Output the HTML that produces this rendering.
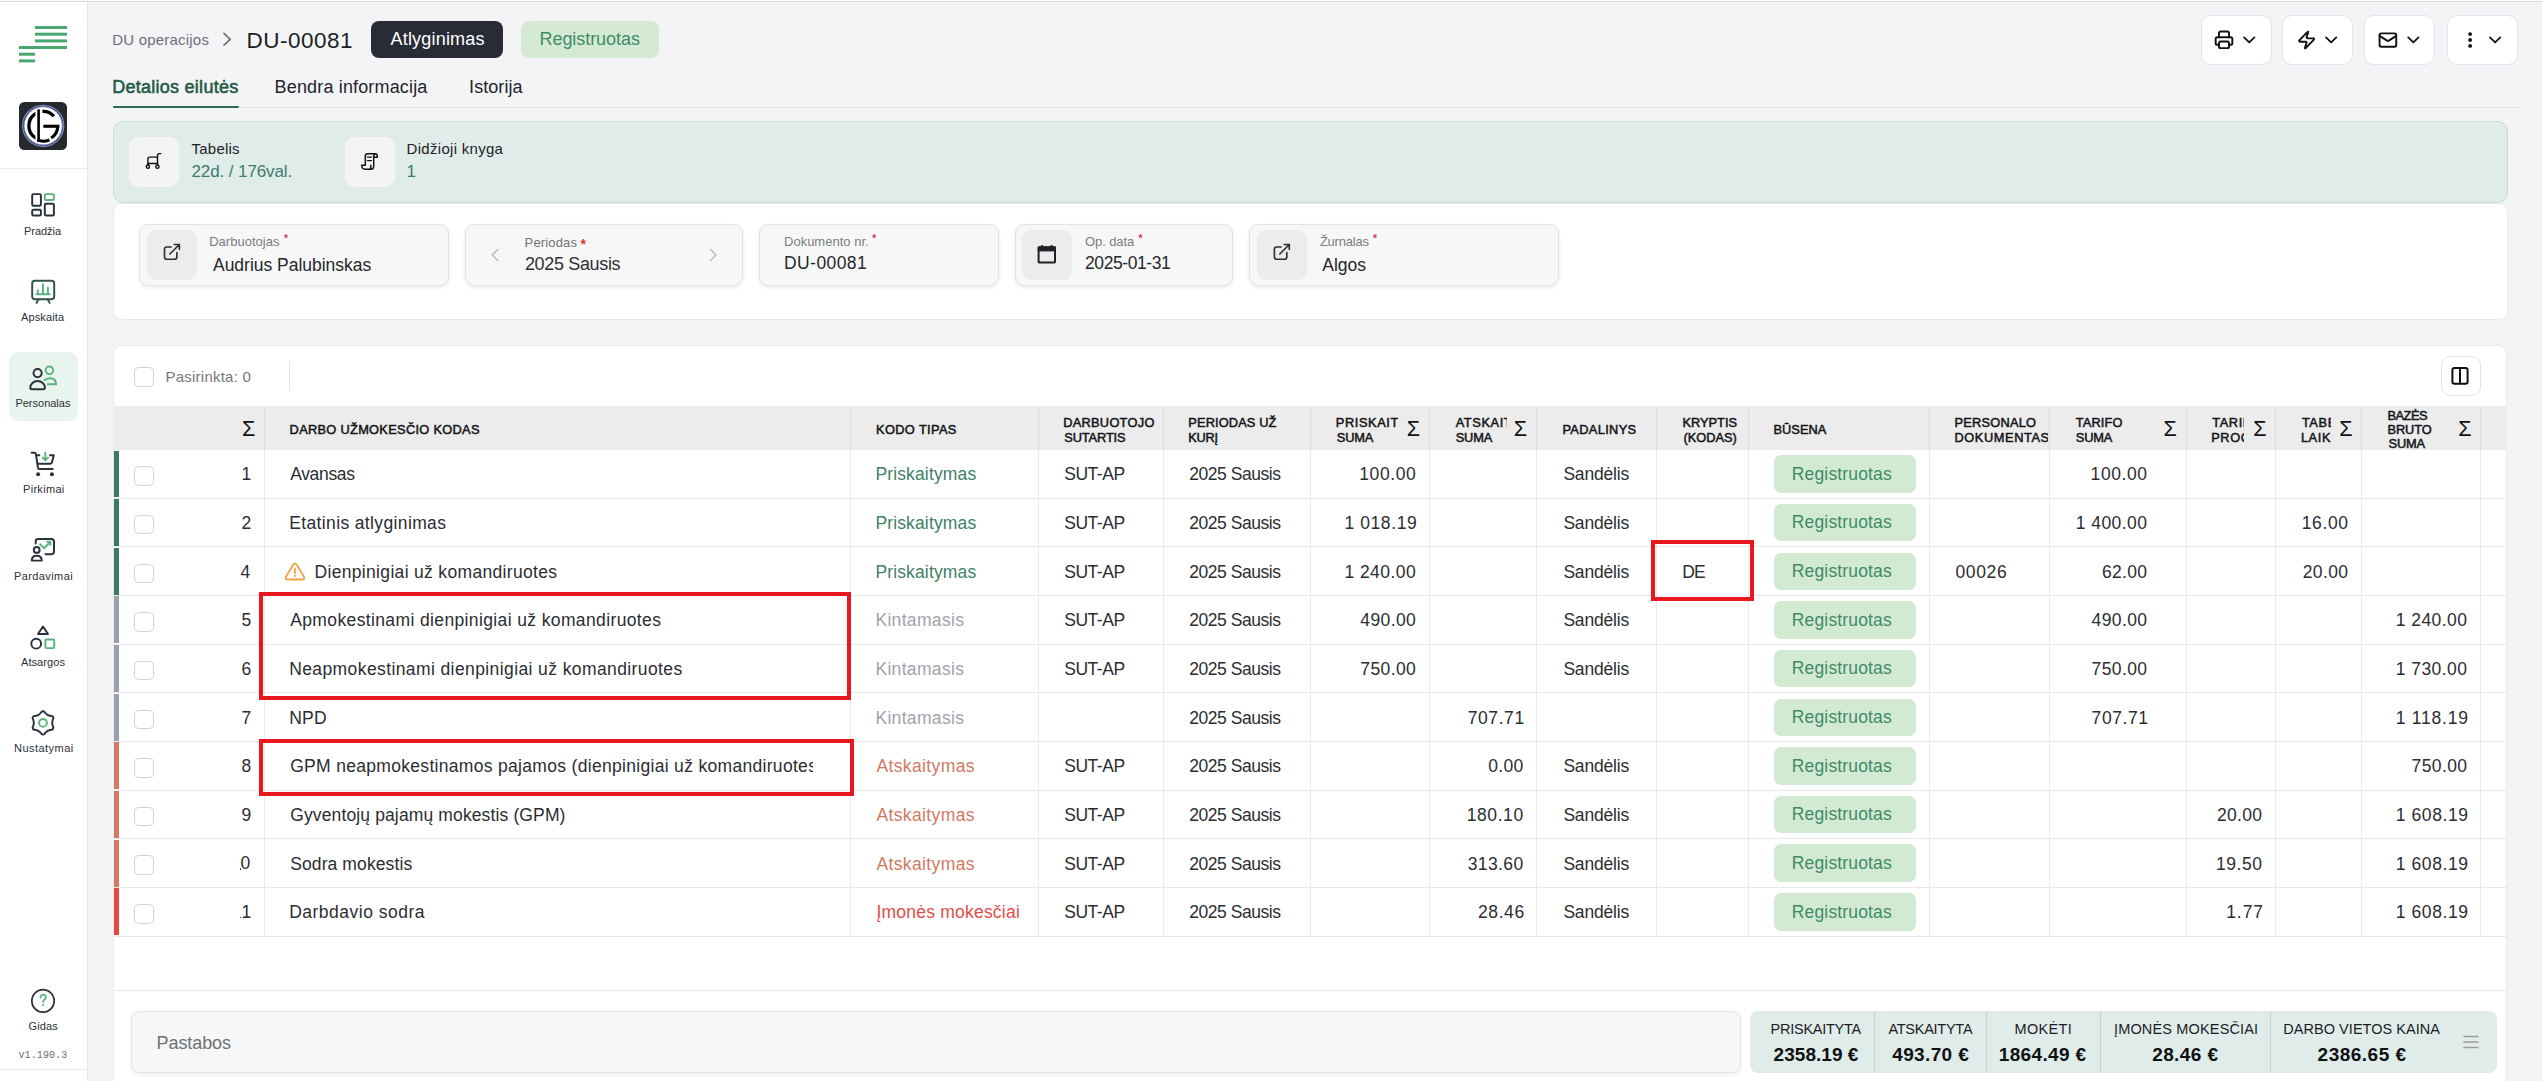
<!DOCTYPE html>
<html lang="lt"><head><meta charset="utf-8"><title>DU-00081</title>
<style>
*{box-sizing:border-box;margin:0;padding:0}
html,body{width:2542px;height:1081px;overflow:hidden;background:#f4f4f6;font-family:"Liberation Sans",sans-serif;color:#23252b}
.a{position:absolute}
.t{position:absolute;white-space:nowrap;line-height:1}
svg{position:absolute;overflow:visible}
</style></head><body>
<div class="a" style="left:0.00px;top:0.00px;width:2542.00px;height:1081.00px;background:#f4f4f6"></div><div class="a" style="left:0.00px;top:0.00px;width:87.00px;height:1081.00px;background:#ffffff"></div><div class="a" style="left:87.00px;top:0.00px;width:1.00px;height:1081.00px;background:#e4e6ea"></div><div class="a" style="left:0.00px;top:0.00px;width:2542.00px;height:1.00px;background:#fbfbfb"></div><div class="a" style="left:0.00px;top:1.00px;width:2542.00px;height:1.00px;background:#d9dcda"></div><div class="a" style="left:0.00px;top:168.00px;width:87.00px;height:1.00px;background:#ebebeb"></div><div class="a" style="left:0.00px;top:1069.00px;width:87.00px;height:1.00px;background:#ebebeb"></div><div class="a" style="left:9.00px;top:352.00px;width:69.00px;height:69.00px;background:#eaf4ee;border-radius:9px"></div><svg class="a" style="left:0;top:0" width="88" height="1081" viewBox="0 0 88 1081"><rect x="35" y="26" width="32" height="3" fill="#48a86f"/><rect x="35" y="32.7" width="32" height="3" fill="#48a86f"/><rect x="35" y="39.4" width="32" height="3" fill="#48a86f"/><rect x="19" y="46" width="48" height="3" fill="#48a86f"/><rect x="19" y="52.7" width="16" height="3" fill="#48a86f"/><rect x="19" y="59.4" width="16" height="3" fill="#48a86f"/><rect x="19" y="102" width="48" height="48" rx="5.5" fill="#27282d"/><circle cx="43.2" cy="125.8" r="20.6" fill="none" stroke="#8196d8" stroke-width="1.1"/><circle cx="43.2" cy="125.8" r="19.1" fill="#ffffff" stroke="#7d8fcf" stroke-width="0.9"/><path d="M35.4 111.83 A16 16 0 0 0 35.4 139.77 L35.4 135.82 A12.7 12.7 0 0 1 35.4 115.78 Z" fill="#000"/><rect x="37.3" y="109.4" width="2.6" height="32.6" fill="#000"/><path d="M37.22 139.88 A15.3 15.3 0 0 0 49.42 139.78" fill="none" stroke="#000" stroke-width="3.0"/><path d="M42.45 111.47 A14.35 14.35 0 0 1 53.86 116.20" fill="none" stroke="#000" stroke-width="3.2"/><rect x="43.3" y="124.7" width="16" height="3.1" fill="#000"/><path d="M57.80 125.80 A14.6 14.6 0 0 1 51.15 138.04" fill="none" stroke="#000" stroke-width="3.1"/><g fill="none" stroke-width="1.95" stroke-linejoin="round"><rect x="32.2" y="194.1" width="8.7" height="11.6" rx="1.2" stroke="#2b303b"/><rect x="32.2" y="209.8" width="8.7" height="5.7" rx="1.2" stroke="#2b303b"/><rect x="44.8" y="194.1" width="9.1" height="5.8" rx="1.2" stroke="#5cb37f"/><rect x="44.8" y="203.8" width="9.1" height="11.7" rx="1.2" stroke="#2b303b"/></g><g fill="none" stroke-width="1.95" stroke-linecap="round" stroke-linejoin="round"><rect x="32.2" y="280.8" width="22" height="18.4" rx="2.6" stroke="#2f5447"/><path d="M38.3 299.6 L36.6 302.9 M47.9 299.6 L49.6 302.9" stroke="#2f5447"/><path d="M37.8 294.3 V290.2 M43 294.3 V284.3 M47.9 294.3 V287.8 M36.4 294.3 H49.5" stroke="#5cb37f"/></g><g fill="none" stroke-width="1.95" stroke-linecap="round" stroke-linejoin="round"><circle cx="37.6" cy="373.1" r="4.1" stroke="#2b303b"/><path d="M30.3 387.6 A7.3 6.6 0 0 1 44.9 387.6 Q44.9 389.2 43.3 389.2 H31.9 Q30.3 389.2 30.3 387.6 Z" stroke="#2b303b"/><circle cx="49.4" cy="370.3" r="3.8" stroke="#5cb37f"/><path d="M44.6 380 Q49 377.2 53.3 378.8 Q56.1 380.4 56.1 384.3 H47.8" stroke="#5cb37f"/></g><g fill="none" stroke-width="1.95" stroke-linecap="round" stroke-linejoin="round"><path d="M31.6 452.8 H34.4 Q35.8 452.8 36 454.4 L37.9 467.8 Q38.1 468.9 39.3 468.9 H52.7" stroke="#2b303b"/><path d="M36.5 455.2 H39.4 M49.9 455.2 H53.8 L51.9 462.6 Q51.6 463.7 50.5 463.7 H37.7" stroke="#2b303b"/><path d="M45.3 452.6 V460 M42.6 457.6 L45.3 460.3 L48 457.6" stroke="#5cb37f"/></g><circle cx="38.1" cy="474.2" r="2" fill="#2b303b"/><circle cx="51.9" cy="474.2" r="2" fill="#2b303b"/><g fill="none" stroke-width="1.95" stroke-linecap="round" stroke-linejoin="round"><path d="M35.7 543.4 V541.4 Q35.7 539 38.4 539 H51.4 Q54 539 54 541.8 V551.6 Q54 554.2 51.5 554.2 H45.4" stroke="#2b303b"/><circle cx="36.7" cy="549.9" r="2.9" stroke="#2b303b"/><path d="M31.8 560.6 Q31.8 555.8 36.7 555.8 Q41.8 555.8 41.8 560.6 Z" stroke="#2b303b"/><path d="M40.1 544.3 L44 548.2 L50.1 542.2 M47.2 541.7 H50.4 V544.8" stroke="#5cb37f"/></g><g fill="none" stroke-width="1.95" stroke-linecap="round" stroke-linejoin="round"><path d="M43 626.5 L48 634 H38 Z" stroke="#2b303b"/><circle cx="36.2" cy="643.7" r="4.9" stroke="#2b303b"/><rect x="45.4" y="639.4" width="8.8" height="8.7" rx="1" stroke="#5cb37f"/></g><path d="M40.97 712.76 A2.1 2.1 0 0 1 45.03 712.76 Q47.20 715.63 50.77 716.07 A2.1 2.1 0 0 1 52.80 719.58 Q51.40 722.90 52.80 726.22 A2.1 2.1 0 0 1 50.77 729.73 Q47.20 730.17 45.03 733.04 A2.1 2.1 0 0 1 40.97 733.04 Q38.80 730.17 35.23 729.73 A2.1 2.1 0 0 1 33.20 726.22 Q34.60 722.90 33.20 719.58 A2.1 2.1 0 0 1 35.23 716.07 Q38.80 715.63 40.97 712.76 Z" fill="none" stroke="#2b303b" stroke-width="1.95" stroke-linejoin="round"/><circle cx="43" cy="722.9" r="3.9" fill="none" stroke="#5cb37f" stroke-width="1.95"/><circle cx="43" cy="1000.9" r="11.2" fill="none" stroke="#2b303b" stroke-width="1.7"/><path d="M40.4 997.6 Q40.6 994.6 43.2 994.6 Q45.9 994.6 45.9 997.2 Q45.9 998.8 44.2 999.7 Q43.1 1000.3 43.1 1002" fill="none" stroke="#5cb37f" stroke-width="1.8" stroke-linecap="round"/><circle cx="43.1" cy="1005" r="1" fill="#5cb37f"/></svg><div class="t" style="left:24.00px;top:225.95px;font-size:11px;color:#2b2f38;font-weight:400;letter-spacing:-0.030px;">Pradžia</div><div class="t" style="left:21.00px;top:312.05px;font-size:11px;color:#2b2f38;font-weight:400;letter-spacing:0.133px;">Apskaita</div><div class="t" style="left:15.40px;top:398.05px;font-size:11px;color:#2b2f38;font-weight:400;">Personalas</div><div class="t" style="left:23.00px;top:484.05px;font-size:11px;color:#2b2f38;font-weight:400;letter-spacing:0.305px;">Pirkimai</div><div class="t" style="left:14.00px;top:570.95px;font-size:11px;color:#2b2f38;font-weight:400;letter-spacing:0.402px;">Pardavimai</div><div class="t" style="left:21.00px;top:657.05px;font-size:11px;color:#2b2f38;font-weight:400;letter-spacing:0.070px;">Atsargos</div><div class="t" style="left:14.00px;top:743.05px;font-size:11px;color:#2b2f38;font-weight:400;letter-spacing:0.459px;">Nustatymai</div><div class="t" style="left:28.50px;top:1021.25px;font-size:11px;color:#2b2f38;font-weight:400;letter-spacing:0.116px;">Gidas</div><div class="t" style="left:18.50px;top:1050.50px;font-size:10px;color:#6e6e6e;font-weight:400;font-family:'Liberation Mono',monospace;letter-spacing:0.099px;">v1.190.3</div><div class="t" style="left:112.20px;top:32.05px;font-size:15px;color:#6d7078;font-weight:400;letter-spacing:0.208px;">DU operacijos</div><svg class="a" style="left:0;top:0" width="1" height="1" viewBox="0 0 1 1"><path d="M224 33.4 L230.2 39.3 L224 45.2" fill="none" stroke="#6f7177" stroke-width="1.7" stroke-linecap="round" stroke-linejoin="round"/></svg><div class="t" style="left:246.50px;top:29.58px;font-size:22.5px;color:#1c1e23;font-weight:400;letter-spacing:0.494px;">DU-00081</div><div class="a" style="left:371.00px;top:21.00px;width:132.00px;height:36.70px;background:#282c37;border-radius:8px"></div><div class="t" style="left:390.50px;top:29.60px;font-size:18px;color:#ffffff;font-weight:400;letter-spacing:0.197px;">Atlyginimas</div><div class="a" style="left:521.00px;top:21.00px;width:138.00px;height:36.70px;background:#d5ead3;border-radius:8px"></div><div class="t" style="left:539.50px;top:29.60px;font-size:18px;color:#3f8a6a;font-weight:400;letter-spacing:-0.059px;">Registruotas</div><div class="a" style="left:2200.50px;top:15.30px;width:71.00px;height:49.40px;background:#ffffff;border:1px solid #e2e5ee;border-radius:10px"></div><div class="a" style="left:2282.30px;top:15.30px;width:71.00px;height:49.40px;background:#ffffff;border:1px solid #e2e5ee;border-radius:10px"></div><div class="a" style="left:2364.30px;top:15.30px;width:71.00px;height:49.40px;background:#ffffff;border:1px solid #e2e5ee;border-radius:10px"></div><div class="a" style="left:2446.60px;top:15.30px;width:71.00px;height:49.40px;background:#ffffff;border:1px solid #e2e5ee;border-radius:10px"></div><svg class="a" style="left:0;top:0" width="1" height="1" viewBox="0 0 1 1"><g transform="translate(2214.0,29.8) scale(0.8333333333333334)" fill="none" stroke="#111" stroke-width="2.3" stroke-linecap="round" stroke-linejoin="round"><path d="M6 18H4a2 2 0 0 1-2-2v-5a2 2 0 0 1 2-2h16a2 2 0 0 1 2 2v5a2 2 0 0 1-2 2h-2"/><path d="M6 9V4a2 2 0 0 1 2-2h8a2 2 0 0 1 2 2v5"/><rect x="6" y="14" width="12" height="8" rx="2"/></g><g transform="translate(2296.6,30.0) scale(0.8333333333333334)" fill="none" stroke="#111" stroke-width="2.3" stroke-linecap="round" stroke-linejoin="round"><path d="M4 14a1 1 0 0 1-.78-1.63l9.9-10.2a.5.5 0 0 1 .86.46l-1.92 6.02A1 1 0 0 0 13 10h7a1 1 0 0 1 .78 1.63l-9.9 10.2a.5.5 0 0 1-.86-.46l1.92-6.02A1 1 0 0 0 11 14z"/></g><g transform="translate(2377.9,30.0) scale(0.8333333333333334)" fill="none" stroke="#111" stroke-width="2.3" stroke-linecap="round" stroke-linejoin="round"><rect width="20" height="16" x="2" y="4" rx="2"/><path d="m22 7-8.97 5.7a1.94 1.94 0 0 1-2.06 0L2 7"/></g><circle cx="2470.1" cy="34.1" r="1.9" fill="#111"/><circle cx="2470.1" cy="40.0" r="1.9" fill="#111"/><circle cx="2470.1" cy="45.9" r="1.9" fill="#111"/><path d="M2244.1 37.4 L2249.25 42.4 L2254.3999999999996 37.4" fill="none" stroke="#111" stroke-width="1.8" stroke-linecap="round" stroke-linejoin="round"/><path d="M2326.0 37.4 L2331.15 42.4 L2336.2999999999997 37.4" fill="none" stroke="#111" stroke-width="1.8" stroke-linecap="round" stroke-linejoin="round"/><path d="M2408.2000000000003 37.4 L2413.3500000000004 42.4 L2418.5 37.4" fill="none" stroke="#111" stroke-width="1.8" stroke-linecap="round" stroke-linejoin="round"/><path d="M2490.0 37.4 L2495.15 42.4 L2500.2999999999997 37.4" fill="none" stroke="#111" stroke-width="1.8" stroke-linecap="round" stroke-linejoin="round"/></svg><div class="t" style="left:112.20px;top:78.20px;font-size:18px;color:#235a45;font-weight:400;letter-spacing:0.263px;-webkit-text-stroke:0.55px #235a45;">Detalios eilutės</div><div class="t" style="left:274.60px;top:78.20px;font-size:18px;color:#22252c;font-weight:400;letter-spacing:0.155px;">Bendra informacija</div><div class="t" style="left:469.10px;top:78.20px;font-size:18px;color:#22252c;font-weight:400;letter-spacing:0.056px;">Istorija</div><div class="a" style="left:113.00px;top:106.60px;width:2405.00px;height:1.00px;background:#dfe1e5"></div><div class="a" style="left:113.00px;top:105.90px;width:125.50px;height:2.40px;background:#2c6a50;border-radius:2px"></div><div class="a" style="left:113.40px;top:202.50px;width:2394.40px;height:117.50px;background:#ffffff;border-radius:8.5px;border:1px solid #e9eaed"></div><div class="a" style="left:113.00px;top:121.00px;width:2394.80px;height:82.00px;background:#e0ecea;border:1px solid #bfe0cd;border-radius:10px"></div><div class="a" style="left:129.00px;top:137.00px;width:50.00px;height:50.00px;background:#f4f4f4;border-radius:9px"></div><div class="a" style="left:345.00px;top:137.00px;width:50.00px;height:50.00px;background:#f4f4f4;border-radius:9px"></div><svg class="a" style="left:0;top:0" width="1" height="1" viewBox="0 0 1 1"><g fill="none" stroke="#111" stroke-width="1.45" stroke-linecap="round" stroke-linejoin="round"><path d="M160.8 153.6 H159.2 Q157.5 153.6 157.5 155.4 V164.2"/><path d="M157.5 157.1 H149.6 Q147.9 157.1 147.9 158.8 V164.9"/><path d="M147.9 163.4 H157.5"/><circle cx="147.9" cy="166.7" r="1.6"/><circle cx="157.4" cy="166.7" r="1.6"/></g><g fill="none" stroke="#111" stroke-width="1.45" stroke-linecap="round" stroke-linejoin="round"><path d="M374.6 153.7 H367.5 Q365.3 153.7 365.3 156 V165.3 H361.6 Q361.9 169.2 365.2 169.2 H371 Q373.7 169.2 373.7 166.3 V155.6"/><path d="M373.7 155.6 Q373.9 153.7 375.5 153.7 Q377.4 153.9 377.4 157.3 H373.8"/><path d="M370.8 165.3 V167.7 Q370.8 169 369.6 169.2"/><path d="M367.4 157.1 H371.5 M367.4 160.6 H371.5"/></g></svg><div class="t" style="left:191.50px;top:140.95px;font-size:15px;color:#1f2228;font-weight:400;letter-spacing:0.235px;">Tabelis</div><div class="t" style="left:191.50px;top:163.15px;font-size:17px;color:#3c7c68;font-weight:400;letter-spacing:-0.104px;">22d. / 176val.</div><div class="t" style="left:406.60px;top:140.95px;font-size:15px;color:#1f2228;font-weight:400;letter-spacing:0.292px;">Didžioji knyga</div><div class="t" style="left:406.60px;top:163.15px;font-size:17px;color:#3c7c68;font-weight:400;">1</div><div class="a" style="left:139.30px;top:224.30px;width:309.40px;height:61.70px;background:#f7f7f7;border:1px solid #e3e3e3;border-radius:9px;box-shadow:0 2px 4px rgba(0,0,0,0.07)"></div><div class="a" style="left:464.60px;top:224.30px;width:278.40px;height:61.70px;background:#f7f7f7;border:1px solid #e3e3e3;border-radius:9px;box-shadow:0 2px 4px rgba(0,0,0,0.07)"></div><div class="a" style="left:759.40px;top:224.30px;width:239.40px;height:61.70px;background:#f7f7f7;border:1px solid #e3e3e3;border-radius:9px;box-shadow:0 2px 4px rgba(0,0,0,0.07)"></div><div class="a" style="left:1014.60px;top:224.30px;width:218.70px;height:61.70px;background:#f7f7f7;border:1px solid #e3e3e3;border-radius:9px;box-shadow:0 2px 4px rgba(0,0,0,0.07)"></div><div class="a" style="left:1249.10px;top:224.30px;width:309.60px;height:61.70px;background:#f7f7f7;border:1px solid #e3e3e3;border-radius:9px;box-shadow:0 2px 4px rgba(0,0,0,0.07)"></div><div class="a" style="left:147.10px;top:229.90px;width:49.80px;height:49.90px;background:#ececec;border-radius:9px"></div><div class="a" style="left:1022.00px;top:229.90px;width:49.80px;height:49.90px;background:#ececec;border-radius:9px"></div><div class="a" style="left:1257.00px;top:229.90px;width:49.80px;height:49.90px;background:#ececec;border-radius:9px"></div><svg class="a" style="left:0;top:0" width="1" height="1" viewBox="0 0 1 1"><g transform="translate(0,0)" fill="none" stroke="#2e2f33" stroke-width="1.65" stroke-linecap="round" stroke-linejoin="round"><path d="M171.2 247 H166.8 Q164.5 247 164.5 249.3 V256.9 Q164.5 259.2 166.8 259.2 H174.6 Q176.9 259.2 176.9 256.9 V252.5"/><path d="M169.9 254 L179.4 244.5 M174.3 244.5 H179.4 V249.5"/></g><g transform="translate(1109.9,0)" fill="none" stroke="#2e2f33" stroke-width="1.65" stroke-linecap="round" stroke-linejoin="round"><path d="M171.2 247 H166.8 Q164.5 247 164.5 249.3 V256.9 Q164.5 259.2 166.8 259.2 H174.6 Q176.9 259.2 176.9 256.9 V252.5"/><path d="M169.9 254 L179.4 244.5 M174.3 244.5 H179.4 V249.5"/></g><path d="M497.8 249.4 L492.2 254.9 L497.8 260.4 M710.4 249.4 L716 254.9 L710.4 260.4" fill="none" stroke="#b9b9b9" stroke-width="1.4" stroke-linecap="round" stroke-linejoin="round"/><g fill="none" stroke="#1f2126" stroke-width="2" stroke-linejoin="round"><rect x="1038.6" y="247.2" width="16.4" height="15.2" rx="0.6"/></g><rect x="1037.8" y="246.4" width="18" height="5" fill="#1f2126"/><rect x="1041" y="245.2" width="2.2" height="2" fill="#1f2126"/><rect x="1050.5" y="245.2" width="2.2" height="2" fill="#1f2126"/></svg><div class="t" style="left:209.20px;top:235.15px;font-size:13px;color:#7b7d82;font-weight:400;letter-spacing:0.020px;">Darbuotojas</div><div class="t" style="left:284.00px;top:234.10px;font-size:10px;color:#d0355c;font-weight:700;">*</div><div class="t" style="left:784.00px;top:235.05px;font-size:13px;color:#7b7d82;font-weight:400;letter-spacing:0.006px;">Dokumento nr.</div><div class="t" style="left:872.30px;top:234.00px;font-size:10px;color:#d0355c;font-weight:700;">*</div><div class="t" style="left:1085.00px;top:235.05px;font-size:13px;color:#7b7d82;font-weight:400;letter-spacing:-0.091px;">Op. data</div><div class="t" style="left:1138.50px;top:234.00px;font-size:10px;color:#d0355c;font-weight:700;">*</div><div class="t" style="left:1319.90px;top:235.05px;font-size:13px;color:#7b7d82;font-weight:400;letter-spacing:-0.225px;">Žurnalas</div><div class="t" style="left:1373.00px;top:234.00px;font-size:10px;color:#d0355c;font-weight:700;">*</div><div class="t" style="left:524.60px;top:236.15px;font-size:13px;color:#6f7175;font-weight:400;letter-spacing:0.142px;">Periodas</div><div class="t" style="left:580.50px;top:237.10px;font-size:14px;color:#d43b3b;font-weight:700;">*</div><div class="t" style="left:213.00px;top:257.12px;font-size:17.5px;color:#25272c;font-weight:400;letter-spacing:-0.017px;">Audrius Palubinskas</div><div class="t" style="left:524.90px;top:254.90px;font-size:18px;color:#2f3034;font-weight:400;letter-spacing:-0.337px;">2025 Sausis</div><div class="t" style="left:784.00px;top:255.23px;font-size:17.5px;color:#25272c;font-weight:400;letter-spacing:0.424px;">DU-00081</div><div class="t" style="left:1085.00px;top:255.23px;font-size:17.5px;color:#25272c;font-weight:400;letter-spacing:-0.420px;">2025-01-31</div><div class="t" style="left:1322.30px;top:257.02px;font-size:17.5px;color:#25272c;font-weight:400;letter-spacing:-0.006px;">Algos</div><div class="a" style="left:113.40px;top:345.00px;width:2394.00px;height:755.00px;background:#ffffff;border:1px solid #e9eaed;border-radius:8.5px"></div><div class="a" style="left:134.10px;top:367.20px;width:19.80px;height:19.80px;border:1.3px solid #d2d2d2;border-radius:4.5px;background:#fff"></div><div class="t" style="left:165.50px;top:369.25px;font-size:15px;color:#76787d;font-weight:400;letter-spacing:0.234px;">Pasirinkta: 0</div><div class="a" style="left:289.00px;top:361.00px;width:1.00px;height:29.60px;background:#e3e3e3"></div><div class="a" style="left:2441.00px;top:356.00px;width:39.50px;height:39.70px;background:#fff;border:1px solid #e2e5ee;border-radius:9px"></div><svg class="a" style="left:0;top:0" width="1" height="1" viewBox="0 0 1 1"><g fill="none" stroke="#111" stroke-width="2" stroke-linejoin="round"><rect x="2452.4" y="368.1" width="15.2" height="15.6" rx="2"/><path d="M2460 368.1 V383.7"/></g></svg><div class="a" style="left:114.40px;top:406.00px;width:2392.00px;height:44.00px;background:#ececec"></div><div class="a" style="left:263.90px;top:406.00px;width:1.00px;height:44.00px;background:#dcdcdc"></div><div class="a" style="left:263.90px;top:450.00px;width:1.00px;height:486.60px;background:#ebebeb"></div><div class="a" style="left:850.10px;top:406.00px;width:1.00px;height:44.00px;background:#dcdcdc"></div><div class="a" style="left:850.10px;top:450.00px;width:1.00px;height:486.60px;background:#ebebeb"></div><div class="a" style="left:1037.80px;top:406.00px;width:1.00px;height:44.00px;background:#dcdcdc"></div><div class="a" style="left:1037.80px;top:450.00px;width:1.00px;height:486.60px;background:#ebebeb"></div><div class="a" style="left:1162.80px;top:406.00px;width:1.00px;height:44.00px;background:#dcdcdc"></div><div class="a" style="left:1162.80px;top:450.00px;width:1.00px;height:486.60px;background:#ebebeb"></div><div class="a" style="left:1310.40px;top:406.00px;width:1.00px;height:44.00px;background:#dcdcdc"></div><div class="a" style="left:1310.40px;top:450.00px;width:1.00px;height:486.60px;background:#ebebeb"></div><div class="a" style="left:1428.90px;top:406.00px;width:1.00px;height:44.00px;background:#dcdcdc"></div><div class="a" style="left:1428.90px;top:450.00px;width:1.00px;height:486.60px;background:#ebebeb"></div><div class="a" style="left:1536.30px;top:406.00px;width:1.00px;height:44.00px;background:#dcdcdc"></div><div class="a" style="left:1536.30px;top:450.00px;width:1.00px;height:486.60px;background:#ebebeb"></div><div class="a" style="left:1656.40px;top:406.00px;width:1.00px;height:44.00px;background:#dcdcdc"></div><div class="a" style="left:1656.40px;top:450.00px;width:1.00px;height:486.60px;background:#ebebeb"></div><div class="a" style="left:1747.70px;top:406.00px;width:1.00px;height:44.00px;background:#dcdcdc"></div><div class="a" style="left:1747.70px;top:450.00px;width:1.00px;height:486.60px;background:#ebebeb"></div><div class="a" style="left:1928.80px;top:406.00px;width:1.00px;height:44.00px;background:#dcdcdc"></div><div class="a" style="left:1928.80px;top:450.00px;width:1.00px;height:486.60px;background:#ebebeb"></div><div class="a" style="left:2048.80px;top:406.00px;width:1.00px;height:44.00px;background:#dcdcdc"></div><div class="a" style="left:2048.80px;top:450.00px;width:1.00px;height:486.60px;background:#ebebeb"></div><div class="a" style="left:2185.50px;top:406.00px;width:1.00px;height:44.00px;background:#dcdcdc"></div><div class="a" style="left:2185.50px;top:450.00px;width:1.00px;height:486.60px;background:#ebebeb"></div><div class="a" style="left:2275.40px;top:406.00px;width:1.00px;height:44.00px;background:#dcdcdc"></div><div class="a" style="left:2275.40px;top:450.00px;width:1.00px;height:486.60px;background:#ebebeb"></div><div class="a" style="left:2361.30px;top:406.00px;width:1.00px;height:44.00px;background:#dcdcdc"></div><div class="a" style="left:2361.30px;top:450.00px;width:1.00px;height:486.60px;background:#ebebeb"></div><div class="a" style="left:2480.00px;top:406.00px;width:1.00px;height:44.00px;background:#dcdcdc"></div><div class="a" style="left:2480.00px;top:450.00px;width:1.00px;height:486.60px;background:#ebebeb"></div><div class="t" style="left:242.10px;top:418.73px;font-size:21.5px;color:#111;font-weight:400;">Σ</div><div class="t" style="left:289.60px;top:423.62px;font-size:12.8px;color:#141518;font-weight:400;letter-spacing:0.304px;-webkit-text-stroke:0.5px #141518;">DARBO UŽMOKESČIO KODAS</div><div class="t" style="left:876.00px;top:423.62px;font-size:12.8px;color:#141518;font-weight:400;letter-spacing:0.374px;-webkit-text-stroke:0.5px #141518;">KODO TIPAS</div><div class="t" style="left:1063.20px;top:416.72px;font-size:12.8px;color:#141518;font-weight:400;letter-spacing:0.279px;-webkit-text-stroke:0.5px #141518;">DARBUOTOJO</div><div class="t" style="left:1064.20px;top:431.52px;font-size:12.8px;color:#141518;font-weight:400;letter-spacing:-0.095px;-webkit-text-stroke:0.5px #141518;">SUTARTIS</div><div class="t" style="left:1188.30px;top:416.72px;font-size:12.8px;color:#141518;font-weight:400;letter-spacing:0.137px;-webkit-text-stroke:0.5px #141518;">PERIODAS UŽ</div><div class="t" style="left:1188.30px;top:431.52px;font-size:12.8px;color:#141518;font-weight:400;letter-spacing:-0.239px;-webkit-text-stroke:0.5px #141518;">KURĮ</div><div class="a" style="left:1334.8px;top:406px;width:63.4px;height:44px;overflow:hidden"><div class="t" style="left:1.00px;top:10.72px;font-size:12.8px;color:#141518;font-weight:400;-webkit-text-stroke:0.5px #141518;letter-spacing:0.6px">PRISKAITYTA</div></div><div class="a" style="left:1334.8px;top:406px;width:63.4px;height:44px;overflow:hidden"><div class="t" style="left:2.00px;top:25.52px;font-size:12.8px;color:#141518;font-weight:400;letter-spacing:-0.146px;-webkit-text-stroke:0.5px #141518;">SUMA</div></div><div class="t" style="left:1406.80px;top:418.73px;font-size:21.5px;color:#111;font-weight:400;">Σ</div><div class="a" style="left:1453.7px;top:406px;width:53.4px;height:44px;overflow:hidden"><div class="t" style="left:2.00px;top:10.72px;font-size:12.8px;color:#141518;font-weight:400;-webkit-text-stroke:0.5px #141518;letter-spacing:0.6px">ATSKAITYTA</div></div><div class="a" style="left:1453.7px;top:406px;width:53.4px;height:44px;overflow:hidden"><div class="t" style="left:2.00px;top:25.52px;font-size:12.8px;color:#141518;font-weight:400;letter-spacing:-0.146px;-webkit-text-stroke:0.5px #141518;">SUMA</div></div><div class="t" style="left:1513.70px;top:418.73px;font-size:21.5px;color:#111;font-weight:400;">Σ</div><div class="t" style="left:1562.40px;top:423.62px;font-size:12.8px;color:#141518;font-weight:400;letter-spacing:0.357px;-webkit-text-stroke:0.5px #141518;">PADALINYS</div><div class="t" style="left:1682.40px;top:416.72px;font-size:12.8px;color:#141518;font-weight:400;letter-spacing:0.019px;-webkit-text-stroke:0.5px #141518;">KRYPTIS</div><div class="t" style="left:1683.40px;top:431.52px;font-size:12.8px;color:#141518;font-weight:400;letter-spacing:0.006px;-webkit-text-stroke:0.5px #141518;">(KODAS)</div><div class="t" style="left:1773.40px;top:423.62px;font-size:12.8px;color:#141518;font-weight:400;letter-spacing:0.062px;-webkit-text-stroke:0.5px #141518;">BŪSENA</div><div class="a" style="left:1953.4px;top:406px;width:94.2px;height:44px;overflow:hidden"><div class="t" style="left:1.00px;top:10.72px;font-size:12.8px;color:#141518;font-weight:400;letter-spacing:0.251px;-webkit-text-stroke:0.5px #141518;">PERSONALO</div></div><div class="a" style="left:1953.4px;top:406px;width:94.2px;height:44px;overflow:hidden"><div class="t" style="left:1.00px;top:25.52px;font-size:12.8px;color:#141518;font-weight:400;-webkit-text-stroke:0.5px #141518;letter-spacing:0.6px">DOKUMENTAS</div></div><div class="t" style="left:2075.80px;top:416.72px;font-size:12.8px;color:#141518;font-weight:400;letter-spacing:0.137px;-webkit-text-stroke:0.5px #141518;">TARIFO</div><div class="t" style="left:2075.80px;top:431.52px;font-size:12.8px;color:#141518;font-weight:400;letter-spacing:-0.146px;-webkit-text-stroke:0.5px #141518;">SUMA</div><div class="t" style="left:2163.50px;top:418.73px;font-size:21.5px;color:#111;font-weight:400;">Σ</div><div class="a" style="left:2210.2px;top:406px;width:33.6px;height:44px;overflow:hidden"><div class="t" style="left:2.00px;top:10.72px;font-size:12.8px;color:#141518;font-weight:400;-webkit-text-stroke:0.5px #141518;letter-spacing:0.6px">TARIFO</div></div><div class="a" style="left:2210.2px;top:406px;width:33.6px;height:44px;overflow:hidden"><div class="t" style="left:1.00px;top:25.52px;font-size:12.8px;color:#141518;font-weight:400;-webkit-text-stroke:0.5px #141518;letter-spacing:0.6px">PROC</div></div><div class="t" style="left:2253.20px;top:418.73px;font-size:21.5px;color:#111;font-weight:400;">Σ</div><div class="a" style="left:2299.9px;top:406px;width:31.1px;height:44px;overflow:hidden"><div class="t" style="left:2.00px;top:10.72px;font-size:12.8px;color:#141518;font-weight:400;-webkit-text-stroke:0.5px #141518;letter-spacing:0.6px">TABELIO</div></div><div class="a" style="left:2299.9px;top:406px;width:31.1px;height:44px;overflow:hidden"><div class="t" style="left:1.00px;top:25.52px;font-size:12.8px;color:#141518;font-weight:400;-webkit-text-stroke:0.5px #141518;letter-spacing:0.6px">LAIK</div></div><div class="t" style="left:2339.20px;top:418.73px;font-size:21.5px;color:#111;font-weight:400;">Σ</div><div class="t" style="left:2387.50px;top:409.92px;font-size:12.8px;color:#141518;font-weight:400;letter-spacing:-0.481px;-webkit-text-stroke:0.5px #141518;">BAZĖS</div><div class="t" style="left:2387.50px;top:424.02px;font-size:12.8px;color:#141518;font-weight:400;letter-spacing:-0.101px;-webkit-text-stroke:0.5px #141518;">BRUTO</div><div class="t" style="left:2388.50px;top:437.92px;font-size:12.8px;color:#141518;font-weight:400;letter-spacing:-0.146px;-webkit-text-stroke:0.5px #141518;">SUMA</div><div class="t" style="left:2458.20px;top:418.73px;font-size:21.5px;color:#111;font-weight:400;">Σ</div><div class="a" style="left:114.40px;top:497.66px;width:2392.00px;height:1.00px;background:#e9e9e9"></div><div class="a" style="left:114.00px;top:450.50px;width:5.00px;height:46.96px;background:#3b7a5e"></div><div class="a" style="left:134.20px;top:466.20px;width:19.60px;height:19.60px;border:1.3px solid #d2d2d2;border-radius:4.5px;background:#fff"></div><div class="t" style="left:241.40px;top:466.32px;font-size:17.5px;color:#2b2d32;font-weight:400;">1</div><div class="t" style="left:290.20px;top:466.32px;font-size:17.5px;color:#2b2d32;font-weight:400;letter-spacing:-0.342px;">Avansas</div><div class="t" style="left:875.40px;top:466.32px;font-size:17.5px;color:#3f8068;font-weight:400;letter-spacing:0.143px;">Priskaitymas</div><div class="t" style="left:1064.20px;top:466.32px;font-size:17.5px;color:#2b2d32;font-weight:400;letter-spacing:-0.467px;">SUT-AP</div><div class="t" style="left:1189.30px;top:466.32px;font-size:17.5px;color:#2b2d32;font-weight:400;letter-spacing:-0.457px;">2025 Sausis</div><div class="t" style="left:1359.30px;top:466.32px;font-size:17.5px;color:#2b2d32;font-weight:400;letter-spacing:0.581px;">100.00</div><div class="t" style="left:1563.40px;top:466.32px;font-size:17.5px;color:#2b2d32;font-weight:400;letter-spacing:-0.197px;">Sandėlis</div><div class="a" style="left:1773.70px;top:455.20px;width:142.30px;height:37.60px;background:#d3ead2;border-radius:7px"></div><div class="t" style="left:1791.80px;top:465.73px;font-size:17.5px;color:#3e8a6a;font-weight:400;letter-spacing:0.155px;">Registruotas</div><div class="t" style="left:2090.60px;top:466.32px;font-size:17.5px;color:#2b2d32;font-weight:400;letter-spacing:0.581px;">100.00</div><div class="a" style="left:114.40px;top:546.32px;width:2392.00px;height:1.00px;background:#e9e9e9"></div><div class="a" style="left:114.00px;top:499.16px;width:5.00px;height:46.96px;background:#3b7a5e"></div><div class="a" style="left:134.20px;top:514.86px;width:19.60px;height:19.60px;border:1.3px solid #d2d2d2;border-radius:4.5px;background:#fff"></div><div class="t" style="left:241.40px;top:514.99px;font-size:17.5px;color:#2b2d32;font-weight:400;">2</div><div class="t" style="left:289.20px;top:514.99px;font-size:17.5px;color:#2b2d32;font-weight:400;letter-spacing:0.367px;">Etatinis atlyginimas</div><div class="t" style="left:875.40px;top:514.99px;font-size:17.5px;color:#3f8068;font-weight:400;letter-spacing:0.143px;">Priskaitymas</div><div class="t" style="left:1064.20px;top:514.99px;font-size:17.5px;color:#2b2d32;font-weight:400;letter-spacing:-0.467px;">SUT-AP</div><div class="t" style="left:1189.30px;top:514.99px;font-size:17.5px;color:#2b2d32;font-weight:400;letter-spacing:-0.457px;">2025 Sausis</div><div class="t" style="left:1344.40px;top:514.99px;font-size:17.5px;color:#2b2d32;font-weight:400;letter-spacing:0.602px;">1 018.19</div><div class="t" style="left:1563.40px;top:514.99px;font-size:17.5px;color:#2b2d32;font-weight:400;letter-spacing:-0.197px;">Sandėlis</div><div class="a" style="left:1773.70px;top:503.86px;width:142.30px;height:37.60px;background:#d3ead2;border-radius:7px"></div><div class="t" style="left:1791.80px;top:514.38px;font-size:17.5px;color:#3e8a6a;font-weight:400;letter-spacing:0.155px;">Registruotas</div><div class="t" style="left:2075.70px;top:514.99px;font-size:17.5px;color:#2b2d32;font-weight:400;letter-spacing:0.459px;">1 400.00</div><div class="t" style="left:2301.80px;top:514.99px;font-size:17.5px;color:#2b2d32;font-weight:400;letter-spacing:0.585px;">16.00</div><div class="a" style="left:114.40px;top:594.98px;width:2392.00px;height:1.00px;background:#e9e9e9"></div><div class="a" style="left:114.00px;top:547.82px;width:5.00px;height:46.96px;background:#3b7a5e"></div><div class="a" style="left:134.20px;top:563.52px;width:19.60px;height:19.60px;border:1.3px solid #d2d2d2;border-radius:4.5px;background:#fff"></div><div class="t" style="left:240.40px;top:563.64px;font-size:17.5px;color:#2b2d32;font-weight:400;">4</div><svg class="a" style="left:0;top:0" width="1" height="1" viewBox="0 0 1 1"><g fill="none" stroke="#f0a43a" stroke-width="1.8" stroke-linecap="round" stroke-linejoin="round"><path d="M293.2 564.7 Q295 562.5 296.8 564.7 L304.1 576.9 Q304.8 579.5 302.2 579.5 H287.8 Q285.2 579.5 285.9 576.9 Z"/><path d="M295 568.7 V573.2"/></g><circle cx="295" cy="575.9" r="1.05" fill="#f0a43a"/></svg><div class="t" style="left:314.50px;top:563.64px;font-size:17.5px;color:#2b2d32;font-weight:400;letter-spacing:0.324px;">Dienpinigiai už komandiruotes</div><div class="t" style="left:875.40px;top:563.64px;font-size:17.5px;color:#3f8068;font-weight:400;letter-spacing:0.143px;">Priskaitymas</div><div class="t" style="left:1064.20px;top:563.64px;font-size:17.5px;color:#2b2d32;font-weight:400;letter-spacing:-0.467px;">SUT-AP</div><div class="t" style="left:1189.30px;top:563.64px;font-size:17.5px;color:#2b2d32;font-weight:400;letter-spacing:-0.457px;">2025 Sausis</div><div class="t" style="left:1344.40px;top:563.64px;font-size:17.5px;color:#2b2d32;font-weight:400;letter-spacing:0.459px;">1 240.00</div><div class="t" style="left:1563.40px;top:563.64px;font-size:17.5px;color:#2b2d32;font-weight:400;letter-spacing:-0.197px;">Sandėlis</div><div class="t" style="left:1682.30px;top:563.64px;font-size:17.5px;color:#2b2d32;font-weight:400;letter-spacing:-0.838px;">DE</div><div class="a" style="left:1773.70px;top:552.52px;width:142.30px;height:37.60px;background:#d3ead2;border-radius:7px"></div><div class="t" style="left:1791.80px;top:563.04px;font-size:17.5px;color:#3e8a6a;font-weight:400;letter-spacing:0.155px;">Registruotas</div><div class="t" style="left:1955.50px;top:563.64px;font-size:17.5px;color:#2b2d32;font-weight:400;letter-spacing:0.642px;">00026</div><div class="t" style="left:2101.90px;top:563.64px;font-size:17.5px;color:#2b2d32;font-weight:400;letter-spacing:0.335px;">62.00</div><div class="t" style="left:2302.80px;top:563.64px;font-size:17.5px;color:#2b2d32;font-weight:400;letter-spacing:0.335px;">20.00</div><div class="a" style="left:114.40px;top:643.64px;width:2392.00px;height:1.00px;background:#e9e9e9"></div><div class="a" style="left:114.00px;top:596.48px;width:5.00px;height:46.96px;background:#9ba1aa"></div><div class="a" style="left:134.20px;top:612.18px;width:19.60px;height:19.60px;border:1.3px solid #d2d2d2;border-radius:4.5px;background:#fff"></div><div class="t" style="left:241.40px;top:612.31px;font-size:17.5px;color:#2b2d32;font-weight:400;">5</div><div class="t" style="left:290.20px;top:612.31px;font-size:17.5px;color:#2b2d32;font-weight:400;letter-spacing:0.374px;">Apmokestinami dienpinigiai už komandiruotes</div><div class="t" style="left:875.40px;top:612.31px;font-size:17.5px;color:#9ea3ab;font-weight:400;letter-spacing:0.329px;">Kintamasis</div><div class="t" style="left:1064.20px;top:612.31px;font-size:17.5px;color:#2b2d32;font-weight:400;letter-spacing:-0.467px;">SUT-AP</div><div class="t" style="left:1189.30px;top:612.31px;font-size:17.5px;color:#2b2d32;font-weight:400;letter-spacing:-0.457px;">2025 Sausis</div><div class="t" style="left:1360.30px;top:612.31px;font-size:17.5px;color:#2b2d32;font-weight:400;letter-spacing:0.381px;">490.00</div><div class="t" style="left:1563.40px;top:612.31px;font-size:17.5px;color:#2b2d32;font-weight:400;letter-spacing:-0.197px;">Sandėlis</div><div class="a" style="left:1773.70px;top:601.18px;width:142.30px;height:37.60px;background:#d3ead2;border-radius:7px"></div><div class="t" style="left:1791.80px;top:611.71px;font-size:17.5px;color:#3e8a6a;font-weight:400;letter-spacing:0.155px;">Registruotas</div><div class="t" style="left:2091.60px;top:612.31px;font-size:17.5px;color:#2b2d32;font-weight:400;letter-spacing:0.381px;">490.00</div><div class="t" style="left:2395.70px;top:612.31px;font-size:17.5px;color:#2b2d32;font-weight:400;letter-spacing:0.459px;">1 240.00</div><div class="a" style="left:114.40px;top:692.30px;width:2392.00px;height:1.00px;background:#e9e9e9"></div><div class="a" style="left:114.00px;top:645.14px;width:5.00px;height:46.96px;background:#9ba1aa"></div><div class="a" style="left:134.20px;top:660.84px;width:19.60px;height:19.60px;border:1.3px solid #d2d2d2;border-radius:4.5px;background:#fff"></div><div class="t" style="left:241.40px;top:660.97px;font-size:17.5px;color:#2b2d32;font-weight:400;">6</div><div class="t" style="left:289.20px;top:660.97px;font-size:17.5px;color:#2b2d32;font-weight:400;letter-spacing:0.399px;">Neapmokestinami dienpinigiai už komandiruotes</div><div class="t" style="left:875.40px;top:660.97px;font-size:17.5px;color:#9ea3ab;font-weight:400;letter-spacing:0.329px;">Kintamasis</div><div class="t" style="left:1064.20px;top:660.97px;font-size:17.5px;color:#2b2d32;font-weight:400;letter-spacing:-0.467px;">SUT-AP</div><div class="t" style="left:1189.30px;top:660.97px;font-size:17.5px;color:#2b2d32;font-weight:400;letter-spacing:-0.457px;">2025 Sausis</div><div class="t" style="left:1360.30px;top:660.97px;font-size:17.5px;color:#2b2d32;font-weight:400;letter-spacing:0.381px;">750.00</div><div class="t" style="left:1563.40px;top:660.97px;font-size:17.5px;color:#2b2d32;font-weight:400;letter-spacing:-0.197px;">Sandėlis</div><div class="a" style="left:1773.70px;top:649.84px;width:142.30px;height:37.60px;background:#d3ead2;border-radius:7px"></div><div class="t" style="left:1791.80px;top:660.37px;font-size:17.5px;color:#3e8a6a;font-weight:400;letter-spacing:0.155px;">Registruotas</div><div class="t" style="left:2091.60px;top:660.97px;font-size:17.5px;color:#2b2d32;font-weight:400;letter-spacing:0.381px;">750.00</div><div class="t" style="left:2395.70px;top:660.97px;font-size:17.5px;color:#2b2d32;font-weight:400;letter-spacing:0.459px;">1 730.00</div><div class="a" style="left:114.40px;top:740.96px;width:2392.00px;height:1.00px;background:#e9e9e9"></div><div class="a" style="left:114.00px;top:693.80px;width:5.00px;height:46.96px;background:#9ba1aa"></div><div class="a" style="left:134.20px;top:709.50px;width:19.60px;height:19.60px;border:1.3px solid #d2d2d2;border-radius:4.5px;background:#fff"></div><div class="t" style="left:241.40px;top:709.62px;font-size:17.5px;color:#2b2d32;font-weight:400;">7</div><div class="t" style="left:289.20px;top:709.62px;font-size:17.5px;color:#2b2d32;font-weight:400;letter-spacing:0.245px;">NPD</div><div class="t" style="left:875.40px;top:709.62px;font-size:17.5px;color:#9ea3ab;font-weight:400;letter-spacing:0.329px;">Kintamasis</div><div class="t" style="left:1189.30px;top:709.62px;font-size:17.5px;color:#2b2d32;font-weight:400;letter-spacing:-0.457px;">2025 Sausis</div><div class="t" style="left:1467.70px;top:709.62px;font-size:17.5px;color:#2b2d32;font-weight:400;letter-spacing:0.581px;">707.71</div><div class="a" style="left:1773.70px;top:698.50px;width:142.30px;height:37.60px;background:#d3ead2;border-radius:7px"></div><div class="t" style="left:1791.80px;top:709.02px;font-size:17.5px;color:#3e8a6a;font-weight:400;letter-spacing:0.155px;">Registruotas</div><div class="t" style="left:2091.60px;top:709.62px;font-size:17.5px;color:#2b2d32;font-weight:400;letter-spacing:0.581px;">707.71</div><div class="t" style="left:2395.70px;top:709.62px;font-size:17.5px;color:#2b2d32;font-weight:400;letter-spacing:0.787px;">1 118.19</div><div class="a" style="left:114.40px;top:789.62px;width:2392.00px;height:1.00px;background:#e9e9e9"></div><div class="a" style="left:114.00px;top:742.46px;width:5.00px;height:46.96px;background:#d27a63"></div><div class="a" style="left:134.20px;top:758.16px;width:19.60px;height:19.60px;border:1.3px solid #d2d2d2;border-radius:4.5px;background:#fff"></div><div class="t" style="left:241.40px;top:758.29px;font-size:17.5px;color:#2b2d32;font-weight:400;">8</div><div class="a" style="left:287.2px;top:741.96px;width:526.0px;height:48.66px;overflow:hidden"><div class="t" style="left:3.00px;top:15.93px;font-size:17.5px;color:#2b2d32;font-weight:400;letter-spacing:0.310px;">GPM neapmokestinamos pajamos (dienpinigiai už komandiruotes)</div></div><div class="t" style="left:876.40px;top:758.29px;font-size:17.5px;color:#cf7a62;font-weight:400;letter-spacing:0.382px;">Atskaitymas</div><div class="t" style="left:1064.20px;top:758.29px;font-size:17.5px;color:#2b2d32;font-weight:400;letter-spacing:-0.467px;">SUT-AP</div><div class="t" style="left:1189.30px;top:758.29px;font-size:17.5px;color:#2b2d32;font-weight:400;letter-spacing:-0.457px;">2025 Sausis</div><div class="t" style="left:1488.30px;top:758.29px;font-size:17.5px;color:#2b2d32;font-weight:400;letter-spacing:0.258px;">0.00</div><div class="t" style="left:1563.40px;top:758.29px;font-size:17.5px;color:#2b2d32;font-weight:400;letter-spacing:-0.197px;">Sandėlis</div><div class="a" style="left:1773.70px;top:747.16px;width:142.30px;height:37.60px;background:#d3ead2;border-radius:7px"></div><div class="t" style="left:1791.80px;top:757.69px;font-size:17.5px;color:#3e8a6a;font-weight:400;letter-spacing:0.155px;">Registruotas</div><div class="t" style="left:2411.60px;top:758.29px;font-size:17.5px;color:#2b2d32;font-weight:400;letter-spacing:0.381px;">750.00</div><div class="a" style="left:114.40px;top:838.28px;width:2392.00px;height:1.00px;background:#e9e9e9"></div><div class="a" style="left:114.00px;top:791.12px;width:5.00px;height:46.96px;background:#d27a63"></div><div class="a" style="left:134.20px;top:806.82px;width:19.60px;height:19.60px;border:1.3px solid #d2d2d2;border-radius:4.5px;background:#fff"></div><div class="t" style="left:241.40px;top:806.95px;font-size:17.5px;color:#2b2d32;font-weight:400;">9</div><div class="t" style="left:290.20px;top:806.95px;font-size:17.5px;color:#2b2d32;font-weight:400;letter-spacing:0.130px;">Gyventojų pajamų mokestis (GPM)</div><div class="t" style="left:876.40px;top:806.95px;font-size:17.5px;color:#cf7a62;font-weight:400;letter-spacing:0.382px;">Atskaitymas</div><div class="t" style="left:1064.20px;top:806.95px;font-size:17.5px;color:#2b2d32;font-weight:400;letter-spacing:-0.467px;">SUT-AP</div><div class="t" style="left:1189.30px;top:806.95px;font-size:17.5px;color:#2b2d32;font-weight:400;letter-spacing:-0.457px;">2025 Sausis</div><div class="t" style="left:1466.70px;top:806.95px;font-size:17.5px;color:#2b2d32;font-weight:400;letter-spacing:0.581px;">180.10</div><div class="t" style="left:1563.40px;top:806.95px;font-size:17.5px;color:#2b2d32;font-weight:400;letter-spacing:-0.197px;">Sandėlis</div><div class="a" style="left:1773.70px;top:795.82px;width:142.30px;height:37.60px;background:#d3ead2;border-radius:7px"></div><div class="t" style="left:1791.80px;top:806.35px;font-size:17.5px;color:#3e8a6a;font-weight:400;letter-spacing:0.155px;">Registruotas</div><div class="t" style="left:2216.90px;top:806.95px;font-size:17.5px;color:#2b2d32;font-weight:400;letter-spacing:0.335px;">20.00</div><div class="t" style="left:2395.70px;top:806.95px;font-size:17.5px;color:#2b2d32;font-weight:400;letter-spacing:0.602px;">1 608.19</div><div class="a" style="left:114.40px;top:886.94px;width:2392.00px;height:1.00px;background:#e9e9e9"></div><div class="a" style="left:114.00px;top:839.78px;width:5.00px;height:46.96px;background:#d27a63"></div><div class="a" style="left:134.20px;top:855.48px;width:19.60px;height:19.60px;border:1.3px solid #d2d2d2;border-radius:4.5px;background:#fff"></div><div class="a" style="left:239.5px;top:839.28px;width:14px;height:48.66px;overflow:hidden"><div class="t" style="left:-10.20px;top:15.93px;font-size:17.5px;color:#2b2d32;font-weight:400;letter-spacing:1.367px;">10</div><div class="a" style="left:0px;top:28.6px;width:1.6px;height:1.8px;background:#26282d;border-radius:1px"></div></div><div class="t" style="left:290.20px;top:855.61px;font-size:17.5px;color:#2b2d32;font-weight:400;letter-spacing:0.104px;">Sodra mokestis</div><div class="t" style="left:876.40px;top:855.61px;font-size:17.5px;color:#cf7a62;font-weight:400;letter-spacing:0.382px;">Atskaitymas</div><div class="t" style="left:1064.20px;top:855.61px;font-size:17.5px;color:#2b2d32;font-weight:400;letter-spacing:-0.467px;">SUT-AP</div><div class="t" style="left:1189.30px;top:855.61px;font-size:17.5px;color:#2b2d32;font-weight:400;letter-spacing:-0.457px;">2025 Sausis</div><div class="t" style="left:1467.70px;top:855.61px;font-size:17.5px;color:#2b2d32;font-weight:400;letter-spacing:0.381px;">313.60</div><div class="t" style="left:1563.40px;top:855.61px;font-size:17.5px;color:#2b2d32;font-weight:400;letter-spacing:-0.197px;">Sandėlis</div><div class="a" style="left:1773.70px;top:844.48px;width:142.30px;height:37.60px;background:#d3ead2;border-radius:7px"></div><div class="t" style="left:1791.80px;top:855.00px;font-size:17.5px;color:#3e8a6a;font-weight:400;letter-spacing:0.155px;">Registruotas</div><div class="t" style="left:2215.90px;top:855.61px;font-size:17.5px;color:#2b2d32;font-weight:400;letter-spacing:0.585px;">19.50</div><div class="t" style="left:2395.70px;top:855.61px;font-size:17.5px;color:#2b2d32;font-weight:400;letter-spacing:0.602px;">1 608.19</div><div class="a" style="left:114.40px;top:935.60px;width:2392.00px;height:1.00px;background:#e9e9e9"></div><div class="a" style="left:114.00px;top:888.44px;width:5.00px;height:46.96px;background:#e8453f"></div><div class="a" style="left:134.20px;top:904.14px;width:19.60px;height:19.60px;border:1.3px solid #d2d2d2;border-radius:4.5px;background:#fff"></div><div class="a" style="left:239.5px;top:887.9399999999999px;width:14px;height:48.66px;overflow:hidden"><div class="t" style="left:-10.20px;top:15.93px;font-size:17.5px;color:#2b2d32;font-weight:400;letter-spacing:3.666px;">11</div><div class="a" style="left:0px;top:28.6px;width:1.6px;height:1.8px;background:#26282d;border-radius:1px"></div></div><div class="t" style="left:289.20px;top:904.26px;font-size:17.5px;color:#2b2d32;font-weight:400;letter-spacing:0.488px;">Darbdavio sodra</div><div class="t" style="left:876.40px;top:904.26px;font-size:17.5px;color:#e34b48;font-weight:400;letter-spacing:0.222px;">Įmonės mokesčiai</div><div class="t" style="left:1064.20px;top:904.26px;font-size:17.5px;color:#2b2d32;font-weight:400;letter-spacing:-0.467px;">SUT-AP</div><div class="t" style="left:1189.30px;top:904.26px;font-size:17.5px;color:#2b2d32;font-weight:400;letter-spacing:-0.457px;">2025 Sausis</div><div class="t" style="left:1478.00px;top:904.26px;font-size:17.5px;color:#2b2d32;font-weight:400;letter-spacing:0.585px;">28.46</div><div class="t" style="left:1563.40px;top:904.26px;font-size:17.5px;color:#2b2d32;font-weight:400;letter-spacing:-0.197px;">Sandėlis</div><div class="a" style="left:1773.70px;top:893.14px;width:142.30px;height:37.60px;background:#d3ead2;border-radius:7px"></div><div class="t" style="left:1791.80px;top:903.66px;font-size:17.5px;color:#3e8a6a;font-weight:400;letter-spacing:0.155px;">Registruotas</div><div class="t" style="left:2226.20px;top:904.26px;font-size:17.5px;color:#2b2d32;font-weight:400;letter-spacing:0.924px;">1.77</div><div class="t" style="left:2395.70px;top:904.26px;font-size:17.5px;color:#2b2d32;font-weight:400;letter-spacing:0.602px;">1 608.19</div><div class="a" style="left:114.40px;top:990.00px;width:2392.00px;height:1.00px;background:#e6e6e6"></div><div class="a" style="left:131.30px;top:1011.30px;width:1609.90px;height:62.10px;background:#f7f7f7;border:1px solid #e3e3e3;border-radius:9px;box-shadow:0 2px 4px rgba(0,0,0,0.07)"></div><div class="t" style="left:156.60px;top:1033.80px;font-size:18px;color:#6f7175;font-weight:400;letter-spacing:-0.093px;">Pastabos</div><div class="a" style="left:1750.20px;top:1011.20px;width:746.60px;height:61.60px;background:#e0ecea;border-radius:8px"></div><div class="a" style="left:1873.70px;top:1011.20px;width:1.00px;height:61.60px;background:#c8d3d1"></div><div class="a" style="left:1985.80px;top:1011.20px;width:1.00px;height:61.60px;background:#c8d3d1"></div><div class="a" style="left:2100.00px;top:1011.20px;width:1.00px;height:61.60px;background:#c8d3d1"></div><div class="a" style="left:2270.00px;top:1011.20px;width:1.00px;height:61.60px;background:#c8d3d1"></div><div class="t" style="left:1770.60px;top:1021.77px;font-size:14.5px;color:#1b1c1f;font-weight:400;letter-spacing:-0.262px;">PRISKAITYTA</div><div class="t" style="left:1773.60px;top:1044.85px;font-size:19px;color:#0f1012;font-weight:700;letter-spacing:0.030px;">2358.19 €</div><div class="t" style="left:1888.40px;top:1021.77px;font-size:14.5px;color:#1b1c1f;font-weight:400;letter-spacing:-0.256px;">ATSKAITYTA</div><div class="t" style="left:1892.20px;top:1044.85px;font-size:19px;color:#0f1012;font-weight:700;letter-spacing:0.373px;">493.70 €</div><div class="t" style="left:2014.50px;top:1021.77px;font-size:14.5px;color:#1b1c1f;font-weight:400;letter-spacing:0.349px;">MOKĖTI</div><div class="t" style="left:1998.80px;top:1044.85px;font-size:19px;color:#0f1012;font-weight:700;letter-spacing:0.343px;">1864.49 €</div><div class="t" style="left:2114.00px;top:1021.77px;font-size:14.5px;color:#1b1c1f;font-weight:400;letter-spacing:0.155px;">ĮMONĖS MOKESČIAI</div><div class="t" style="left:2152.20px;top:1044.85px;font-size:19px;color:#0f1012;font-weight:700;letter-spacing:0.396px;">28.46 €</div><div class="t" style="left:2283.30px;top:1021.77px;font-size:14.5px;color:#1b1c1f;font-weight:400;letter-spacing:0.036px;">DARBO VIETOS KAINA</div><div class="t" style="left:2317.60px;top:1044.85px;font-size:19px;color:#0f1012;font-weight:700;letter-spacing:0.493px;">2386.65 €</div><svg class="a" style="left:0;top:0" width="1" height="1" viewBox="0 0 1 1"><path d="M2463.4 1036.5 H2478.5 M2463.4 1042.1 H2478.5 M2463.4 1047.6 H2478.5" stroke="#9b9b9b" stroke-width="1.5"/></svg><div class="a" style="left:259.20px;top:592.20px;width:591.80px;height:107.50px;border:4.9px solid #e8161f"></div><div class="a" style="left:258.90px;top:739.00px;width:594.90px;height:57.00px;border:4.9px solid #e8161f"></div><div class="a" style="left:1651.10px;top:540.00px;width:102.90px;height:60.70px;border:4.9px solid #e8161f"></div>
</body></html>
